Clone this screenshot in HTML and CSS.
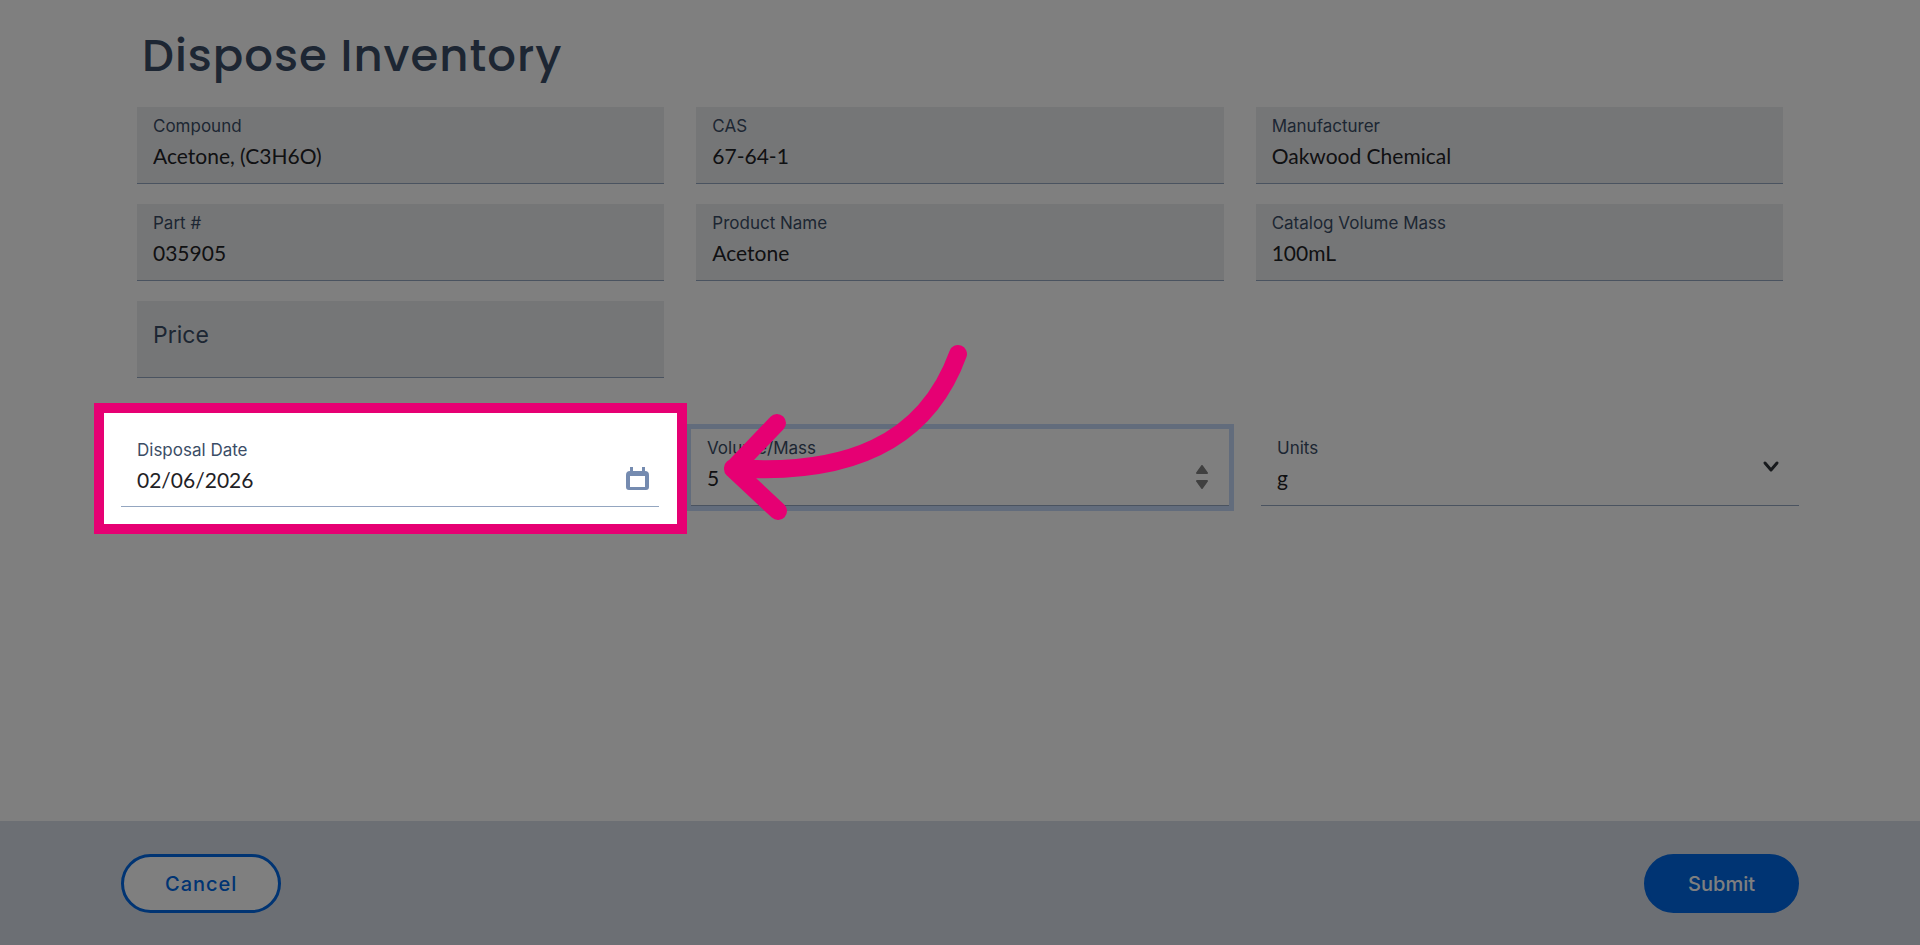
FILE: index.html
```html
<!DOCTYPE html>
<html lang="en">
<head>
<meta charset="utf-8">
<title>Dispose Inventory</title>
<link rel="stylesheet" href="styles.css">
</head>
<body>

<form class="page">
	<main class="content">
		<h1 class="title">Dispose Inventory</h1>

		<div class="details">
			<div class="field readonly">
				<label for="compound">Compound</label>
				<input type="text" id="compound" value="Acetone, (C3H6O)" readonly>
			</div>
			<div class="field readonly">
				<label for="cas">CAS</label>
				<input type="text" id="cas" value="67-64-1" readonly>
			</div>
			<div class="field readonly">
				<label for="manufacturer">Manufacturer</label>
				<input type="text" id="manufacturer" value="Oakwood Chemical" readonly>
			</div>
			<div class="field readonly">
				<label for="part">Part #</label>
				<input type="text" id="part" value="035905" readonly>
			</div>
			<div class="field readonly">
				<label for="product">Product Name</label>
				<input type="text" id="product" value="Acetone" readonly>
			</div>
			<div class="field readonly">
				<label for="catalog">Catalog Volume Mass</label>
				<input type="text" id="catalog" value="100mL" readonly>
			</div>
			<div class="field readonly empty">
				<label for="price">Price</label>
				<input type="text" id="price" readonly>
			</div>
		</div>

		<div class="disposal">
			<div class="field target">
				<label for="date">Disposal Date</label>
				<div class="control">
					<input type="text" id="date" value="02/06/2026">
					<button type="button" class="icon-btn" aria-label="Open calendar">
						<svg class="calendar" width="23" height="24" viewBox="0 0 23 24"><path fill-rule="evenodd" d="M4 0h3v4h9V0h3v4a4 4 0 0 1 4 4v12a3 3 0 0 1-3 3H3a3 3 0 0 1-3-3V8a4 4 0 0 1 4-4zM4 9v11h15V9z"/></svg>
					</button>
				</div>

				<!-- highlight and pointer -->
				<div class="spotlight"></div>
				<svg class="arrow" width="260" height="190" viewBox="0 0 260 190"><path d="M238 14C205 105 125 136 13 128M57 83L13 129L58 171"/></svg>
			</div>
			<div class="field focused">
				<label for="volume">Volume/Mass</label>
				<div class="control">
					<input type="number" id="volume" value="5">
					<svg class="stepper" width="12" height="24" viewBox="0 0 12 24"><path d="M6 1L11 8H1zM6 23L1 16H11z"/></svg>
				</div>
			</div>
			<div class="field">
				<label for="units">Units</label>
				<div class="control">
					<select id="units">
						<option>g</option>
					</select>
					<svg class="chevron" width="16" height="10" viewBox="0 0 16 10"><path d="M2 1L8 8L14 1"/></svg>
				</div>
			</div>
		</div>
	</main>

	<footer class="actions">
		<button type="button" class="btn cancel">Cancel</button>
		<button type="submit" class="btn submit">Submit</button>
	</footer>
</form>

</body>
</html>
```

FILE: styles.css
```css
/*reset*/
* { box-sizing: border-box; padding: 0; margin: 0; }
body { font-family: Inter, "Liberation Sans", sans-serif; font-size: 17px; color: #3b4d66; background: #fff; }
input, select, button { font: inherit; border: none; outline: none; background: none; }

/*page*/
.page { display: flex; flex-direction: column; min-height: 100vh; position: relative; overflow: hidden; }
.content { flex: 1; padding: 28px 121px 40px; }
.title { font-family: Poppins, Inter, sans-serif; font-size: 45px; font-weight: 500; line-height: 56px; letter-spacing: 1px; margin: 0 16px 23px 21px; }
.details { display: grid; grid-template-columns: repeat(3, 1fr); gap: 20px 32px; margin: 0 16px 51px; }
.disposal { display: grid; grid-template-columns: repeat(3, 1fr); gap: 32px; }

/*field*/
.field { display: flex; flex-direction: column; height: 77px; padding: 9px 16px 0; border-bottom: 1px solid #94a6c0; }
.field label { line-height: 20px; }
.field input, .field select { width: 100%; height: 38px; font-family: Lato, sans-serif; font-size: 21px; color: #1f2226; appearance: none; }
.readonly { background: #ebedef; }
.empty label { font-size: 23px; line-height: 50px; }
.empty input { height: 16px; }
.focused { outline: 5px solid #c4d8f8; }
.control { display: flex; align-items: center; }
.field input[type=number] { appearance: textfield; }

/*icons*/
.icon-btn { margin-right: -6px; cursor: pointer; line-height: 0; }
.calendar { fill: #758bb0; }
.stepper { flex: none; margin-right: 5px; fill: #808080; stroke: #808080; stroke-width: 2; stroke-linejoin: round; }
.chevron { flex: none; margin: 0 4px 20px 0; fill: none; stroke: #30343a; stroke-width: 3; stroke-linecap: round; stroke-linejoin: round; overflow: visible; }

/*spotlight*/
.target { position: relative; height: 78px; padding-top: 11px; }
.spotlight { position: absolute; z-index: 1; top: -26px; right: -28px; bottom: -28px; left: -27px; border: 10px solid #e60073; box-shadow: 0 0 0 3000px rgba(0, 0, 0, 0.5); pointer-events: none; }
.arrow { position: absolute; z-index: 2; top: -89px; left: calc(100% + 61px); fill: none; stroke: #e60073; stroke-width: 18; stroke-linecap: round; stroke-linejoin: round; pointer-events: none; }

/*footer*/
.actions { display: flex; justify-content: space-between; padding: 33px 121px 32px; background: #d9dfe8; }
.btn { height: 59px; padding: 0 41px; border: 3px solid #0068e6; border-radius: 30px; font-size: 20px; font-weight: 500; cursor: pointer; }
.cancel { letter-spacing: 1px; color: #0068e6; background: #fff; }
.submit { color: #fff; background: #0068e6; }
```
